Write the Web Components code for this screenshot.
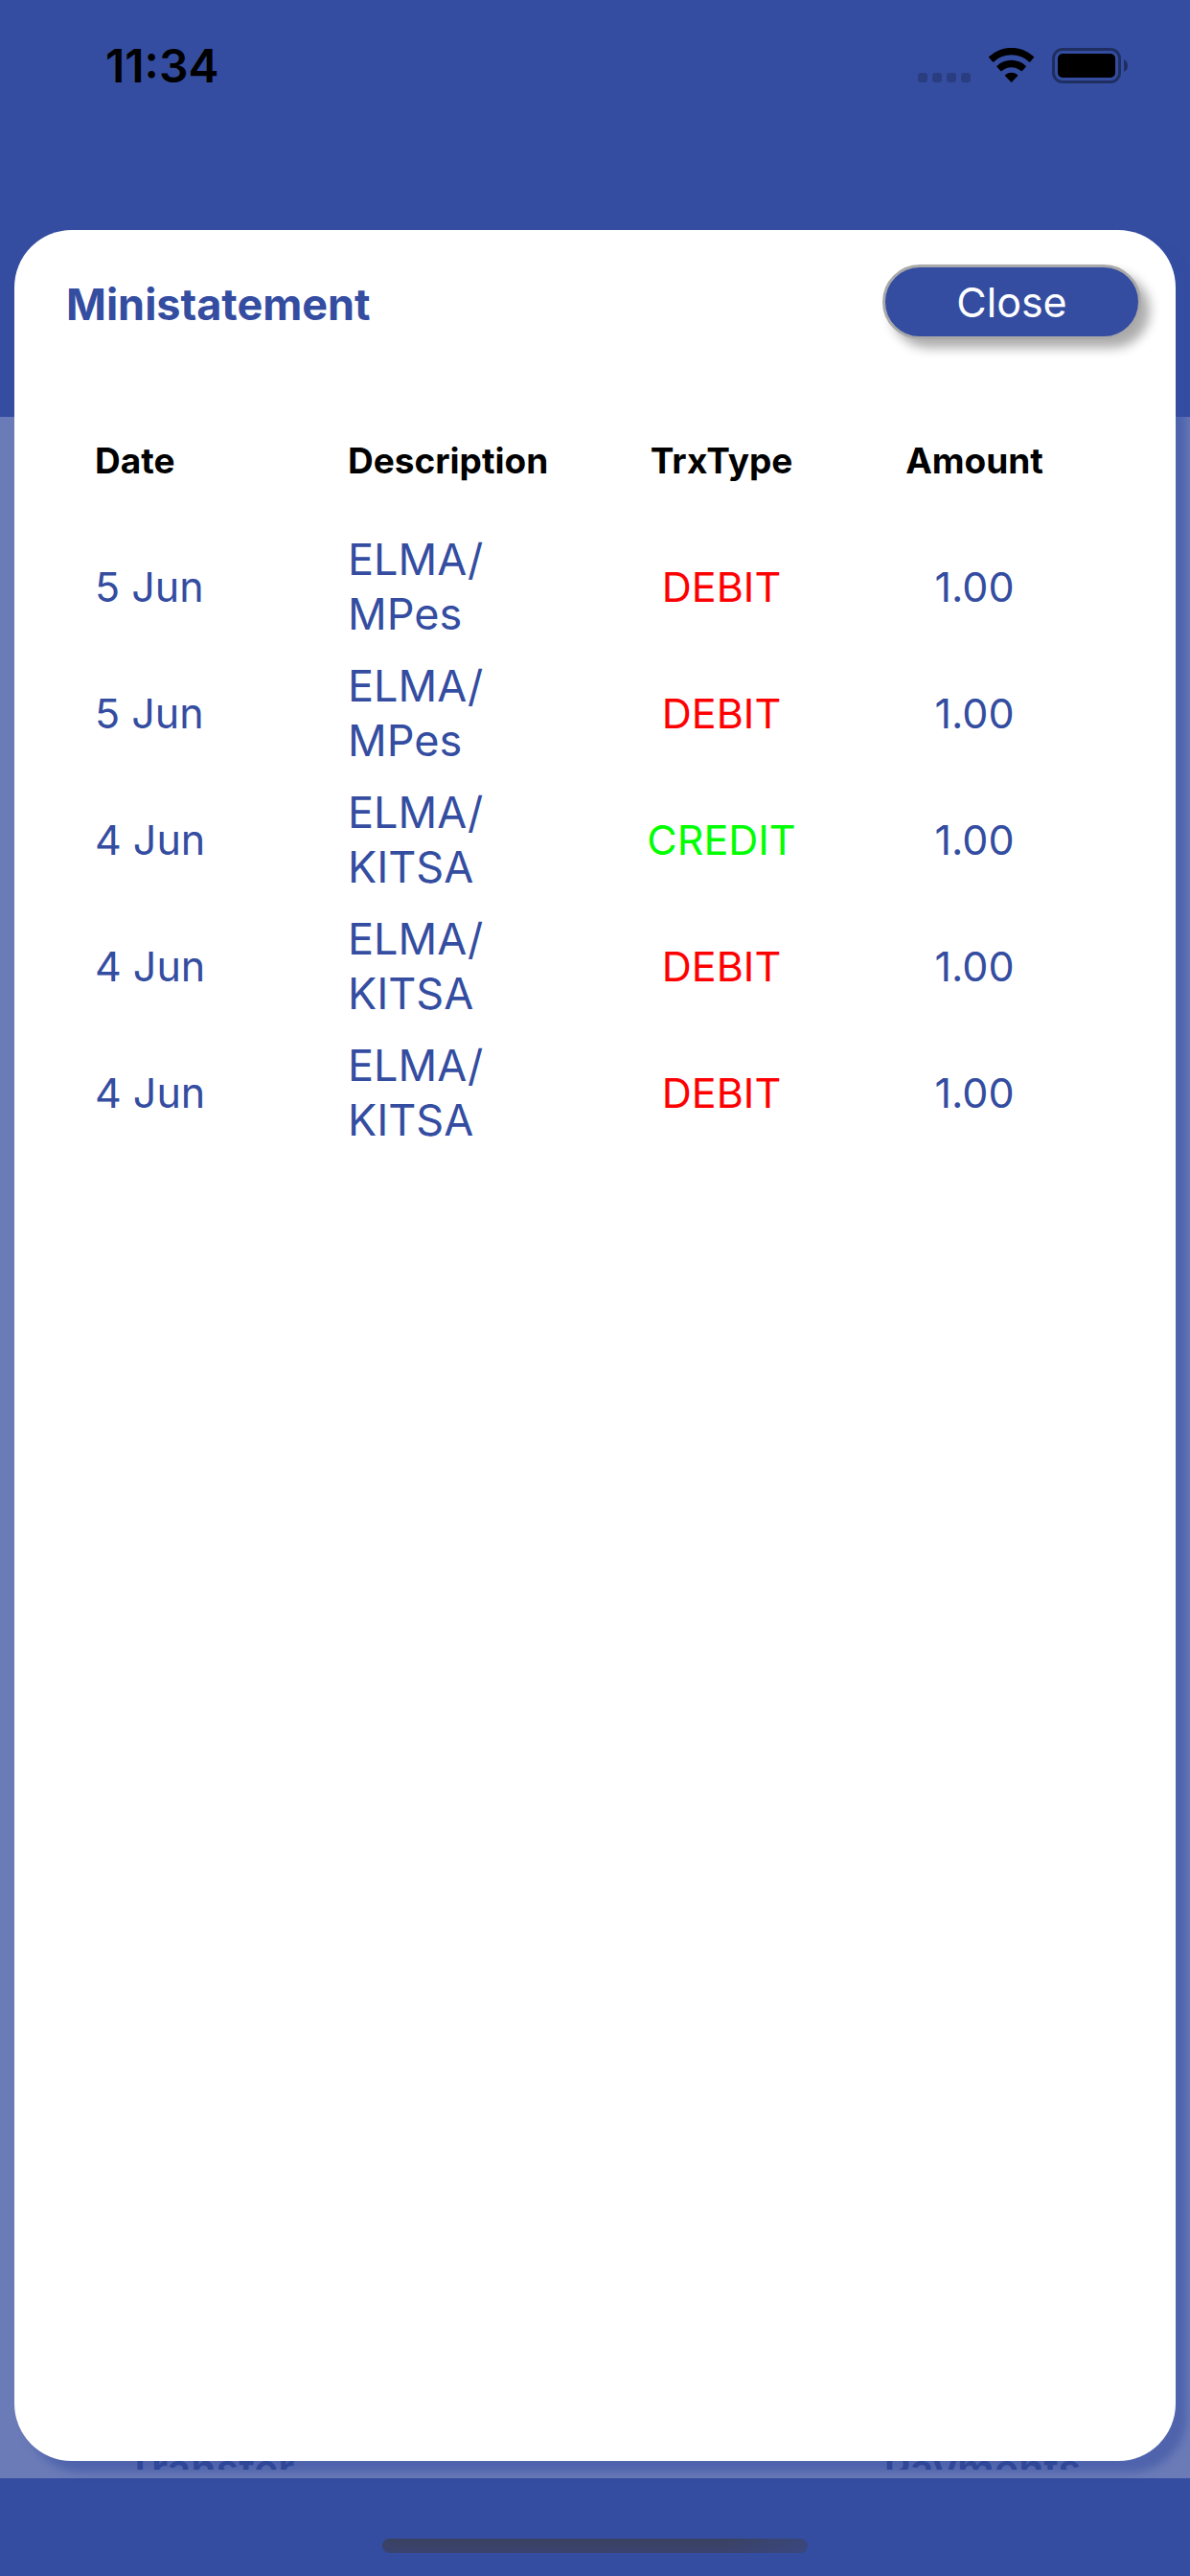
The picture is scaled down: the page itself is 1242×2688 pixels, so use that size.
<!DOCTYPE html>
<html lang="en">
<head>
<meta charset="utf-8">
<meta name="viewport" content="width=device-width, initial-scale=1">
<title>Ministatement</title>
<style>
  :root { --brand: #344da1; --debit: #ff0000; --credit: #00ff00; }
  body { margin: 0; font-family: Inter, "Liberation Sans", sans-serif; color: var(--brand); background: var(--brand); }
</style>
</head>
<body>
<app-screen>
  <status-bar slot="status" time="11:34"></status-bar>
  <tile-labels slot="page">
    <span>Transfer</span>
    <span>Payments</span>
  </tile-labels>
  <sheet-modal slot="modal" heading="Ministatement">
    <statement-table></statement-table>
  </sheet-modal>
</app-screen>

<script>
function define(name, markup, setup) {
  const template = document.createElement('template');
  template.innerHTML = markup;
  customElements.define(name, class extends HTMLElement {
    connectedCallback() {
      if (this.shadowRoot) return;
      this.attachShadow({ mode: 'open' }).append(template.content.cloneNode(true));
      if (setup) setup(this, this.shadowRoot);
    }
  });
}

define('app-screen', `
<style>
  :host { display: flex; flex-direction: column; position: relative; min-height: 100vh; overflow: hidden; }
  header { height: 435px; }
  main { flex: 1; display: flex; flex-direction: column; justify-content: flex-end; padding-bottom: 9px; background: #6b7bb8; }
  footer { height: 102px; display: flex; justify-content: center; align-items: flex-end; }
  .home { width: 444px; height: 15px; margin-bottom: 24px; border-radius: 8px;
    background: linear-gradient(90deg, #344da100 80%, #3a4a8a99), linear-gradient(#3a4160, #3a4370); }
  .overlay { position: absolute; inset: 240px 15px 120px; display: flex; }
</style>
<header><slot name="status"></slot></header>
<main><slot name="page"></slot></main>
<footer><div class="home"></div></footer>
<div class="overlay"><slot name="modal"></slot></div>
`);

define('status-bar', `
<style>
  :host { display: flex; align-items: center; justify-content: space-between; height: 136px; padding: 0 64px 0 110px; color: #000; }
  time { font-size: 48px; font-weight: 600; }
  .icons { display: flex; align-items: center; gap: 18px; }
  svg { display: block; }
</style>
<time></time>
<div class="icons">
  <svg width="56" height="37" viewBox="0 0 56 37" fill="#000" fill-opacity=".2" aria-hidden="true">
    <rect x="0" y="26" width="10" height="10" rx="3"/><rect x="15" y="26" width="10" height="10" rx="3"/>
    <rect x="30" y="26" width="10" height="10" rx="3"/><rect x="45" y="26" width="10" height="10" rx="3"/>
  </svg>
  <svg width="48" height="37" viewBox="0 0 48 37" aria-hidden="true">
    <path d="M0.3 10.3Q-.3 9.7.3 9.1A34 34 0 0 1 46.9 9.1Q47.5 9.7 46.9 10.3L43.2 14.4Q42.6 15 42 14.4A27 27 0 0 0 5.200 14.4Q4.600 15 4 14.4Z"/>
    <path d="M8.600 19.900Q8 19.300 8.600 18.700A22 22 0 0 1 38.600 18.700Q39.200 19.300 38.600 19.900L34.800 24Q34.200 24.600 33.600 24A15 15 0 0 0 13.600 24Q13 24.600 12.400 24Z"/>
    <path d="M17.200 29.200Q16.700 28.600 17.300 28A10 10 0 0 1 29.900 28Q30.500 28.600 30 29.200L24.200 35.600Q23.600 36.200 23 35.600Z"/>
  </svg>
  <svg width="80" height="37" viewBox="0 0 80 37" aria-hidden="true">
    <rect x="1.500" y="1.500" width="69" height="34" rx="9.500" fill="none" stroke="#000" stroke-opacity=".4" stroke-width="3"/>
    <rect x="6" y="6" width="60" height="25" rx="5"/>
    <path d="M75 12Q79 14 79 18.500T75 25Z" fill-opacity=".4"/>
  </svg>
</div>
`, (host, root) => { root.querySelector('time').textContent = host.getAttribute('time'); });

define('tile-labels', `
<style>
  :host { display: flex; justify-content: space-between; height: 27px; padding: 0 114px 0 132px; overflow: hidden;
    font-size: 43px; line-height: 52px; font-weight: 600; color: #2d438f; }
</style>
<slot></slot>
`);

define('sheet-modal', `
<style>
  :host { flex: 1; display: block; border-radius: 60px; background: #fff; box-shadow: 12px 12px 9px rgba(52, 77, 161, .5); }
  header { display: flex; justify-content: space-between; align-items: flex-end; padding: 36px 36px 60px 54px; }
  h1 { margin: 0; font-size: 45px; line-height: 72px; font-weight: 700; }
  button { width: 270px; height: 78px; padding: 0; border: 3px solid #a9a9a9; border-radius: 39px;
    background: var(--brand); color: #fff; font: 400 43px/72px Inter, "Liberation Sans", sans-serif;
    box-shadow: 9px 9px 12px rgba(0, 0, 0, .33); }
</style>
<header><h1></h1><button type="button">Close</button></header>
<slot></slot>
`, (host, root) => { root.querySelector('h1').textContent = host.getAttribute('heading'); });

define('statement-table', `
<style>
  :host { display: block; padding: 0 78px; }
  table { width: 100%; table-layout: fixed; border-collapse: collapse; }
  tr { height: 132px; }
  th, td { padding: 9px 6px; text-align: left; vertical-align: middle; line-height: 57px; }
  th { color: #000; font-size: 37px; font-weight: 700; }
  td { font-size: 43px; }
  td.description { font-size: 45px; padding-right: 36px; }
  .type, .amount { text-align: center; }
  .debit { color: var(--debit); }
  .credit { color: var(--credit); }
</style>
<table>
  <thead><tr><th>Date</th><th>Description</th><th class="type">TrxType</th><th class="amount">Amount</th></tr></thead>
  <tbody></tbody>
</table>
`, (host, root) => {
  const rows = [
    ['5 Jun', 'ELMA/MPes', 'DEBIT', '1.00'],
    ['5 Jun', 'ELMA/MPes', 'DEBIT', '1.00'],
    ['4 Jun', 'ELMA/KITSA', 'CREDIT', '1.00'],
    ['4 Jun', 'ELMA/KITSA', 'DEBIT', '1.00'],
    ['4 Jun', 'ELMA/KITSA', 'DEBIT', '1.00']
  ];
  root.querySelector('tbody').innerHTML = rows.map(([date, description, type, amount]) => `
    <tr><td>${date}</td><td class="description">${description.replace('/', '/<br>')}</td>
    <td class="type ${type.toLowerCase()}">${type}</td><td class="amount">${amount}</td></tr>`).join('');
});
</script>
</body>
</html>
